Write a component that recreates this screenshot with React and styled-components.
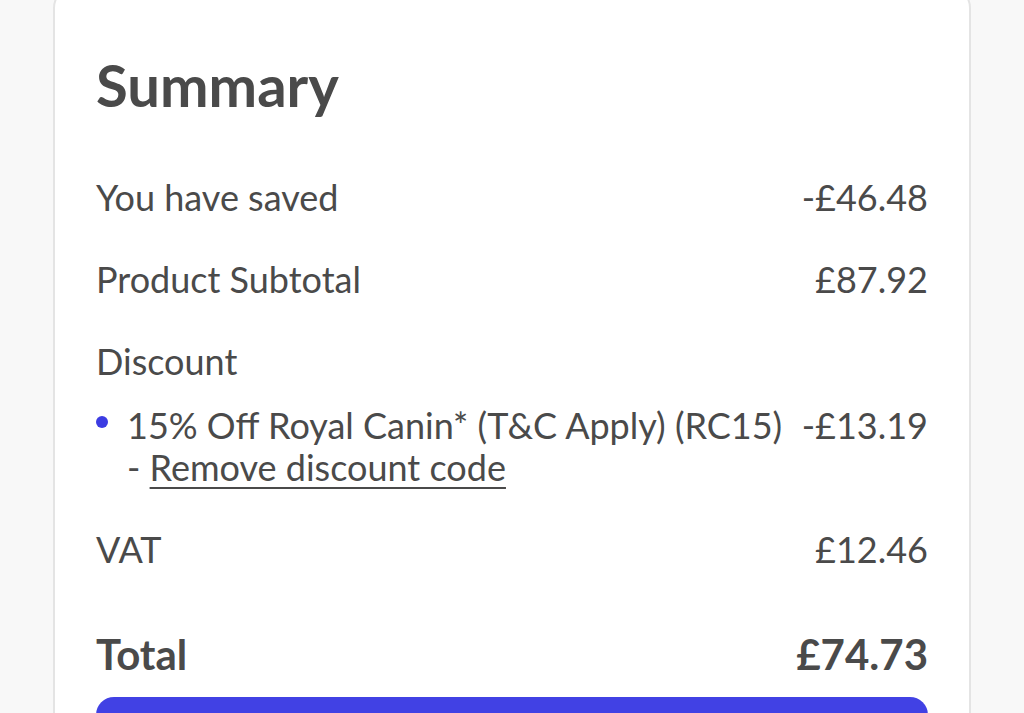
import React from 'react';
import styled, { createGlobalStyle } from 'styled-components';

const GlobalStyle = createGlobalStyle`
  html {
    overflow: hidden;
  }
  body {
    margin: 0;
    padding: 0;
    background: #f8f8f8;
    font-family: Lato, "Open Sans", "Liberation Sans", sans-serif;
    color: #4a4a4a;
  }
`;

const summary = {
  saved: '-£46.48',
  subtotal: '£87.92',
  discount: {
    label: '15% Off Royal Canin* (T&C Apply) (RC15)',
    amount: '-£13.19',
  },
  vat: '£12.46',
  total: '£74.73',
};

const App = () => (
  <>
    <GlobalStyle />
    <Page>
      <Card>
        <Title>Summary</Title>

        <Row>
          <span>You have saved</span>
          <span>{summary.saved}</span>
        </Row>

        <Row>
          <span>Product Subtotal</span>
          <span>{summary.subtotal}</span>
        </Row>

        <Row>
          <span>Discount</span>
        </Row>
        <DiscountList>
          <DiscountItem>
            <Bullet />
            <DiscountLabel>
              {summary.discount.label} - <RemoveLink href="#">Remove discount code</RemoveLink>
            </DiscountLabel>
            <Amount>{summary.discount.amount}</Amount>
          </DiscountItem>
        </DiscountList>

        <Row>
          <span>VAT</span>
          <span>{summary.vat}</span>
        </Row>

        <TotalRow>
          <span>Total</span>
          <span>{summary.total}</span>
        </TotalRow>

        <CheckoutButton type="button">Continue to checkout</CheckoutButton>
      </Card>
    </Page>
  </>
);

export default App;

/* ---------- Styled Components ---------- */
const Page = styled.div`
  padding: 0 53px 40px;
`;

const Card = styled.section`
  margin-top: -14px;
  background: #fff;
  border: 2px solid #e4e4e4;
  border-radius: 22px;
  padding: 62px 41px 40px;
  display: flex;
  flex-direction: column;
`;

const Title = styled.h2`
  margin: 0 0 56px;
  font-size: 58px;
  line-height: 70px;
  font-weight: 700;
  color: #4a4a4a;
`;

const Row = styled.div`
  display: flex;
  justify-content: space-between;
  font-size: 36px;
  line-height: 42px;
  & + & {
    margin-top: 40px;
  }
`;

const DiscountList = styled.ul`
  list-style: none;
  margin: 22px 0 40px;
  padding: 0;
`;

const DiscountItem = styled.li`
  display: flex;
  align-items: flex-start;
  font-size: 36px;
  line-height: 42px;
`;

// blue dot in front of each applied code
const Bullet = styled.span`
  flex: none;
  width: 12px;
  height: 12px;
  margin: 12px 19px 0 0;
  border-radius: 50%;
  background: #3c3ce2;
`;

const DiscountLabel = styled.span`
  flex: 1;
  min-width: 0;
`;

const Amount = styled.span`
  flex: none;
  margin-left: 12px;
`;

const RemoveLink = styled.a`
  color: inherit;
  text-decoration: underline;
  text-decoration-thickness: 2px;
  text-underline-offset: 6px;
`;

const TotalRow = styled(Row)`
  font-size: 42px;
  line-height: 48px;
  font-weight: 700;
  && {
    margin-top: 60px;
  }
`;

const CheckoutButton = styled.button`
  margin-top: 19px;
  height: 68px;
  border: none;
  border-radius: 18px;
  background: #4141e4;
  color: #fff;
  font-family: inherit;
  font-size: 26px;
  font-weight: 700;
  cursor: pointer;
`;
